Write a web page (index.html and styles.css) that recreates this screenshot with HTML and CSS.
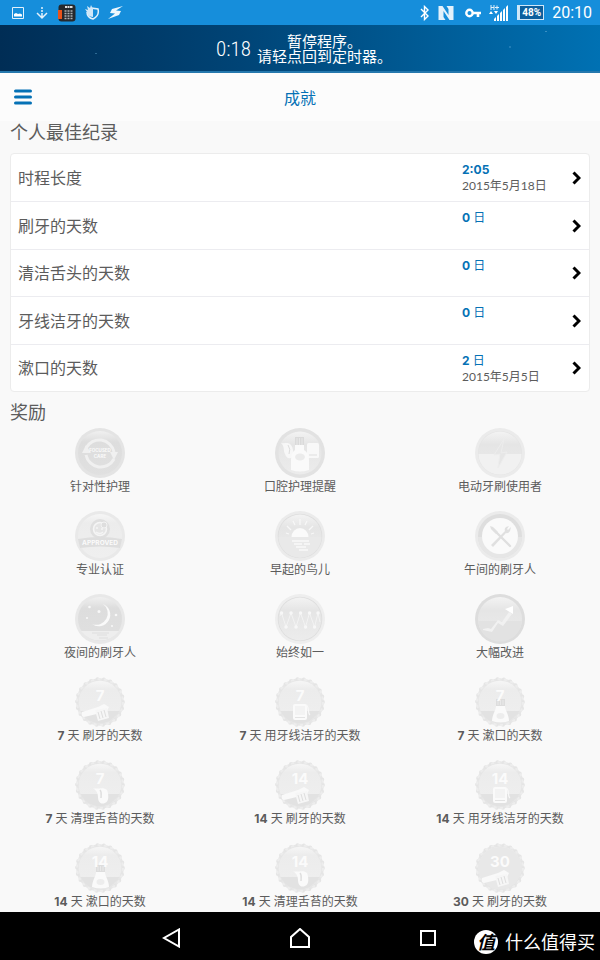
FILE: index.html
```
<!DOCTYPE html>
<html lang="zh-CN">
<head>
<meta charset="utf-8">
<meta name="viewport" content="width=device-width, initial-scale=1">
<title>成就</title>
<link rel="stylesheet" href="styles.css">
</head>
<body>
<svg class="defs" aria-hidden="true">
  <defs>
    <linearGradient id="face" x1="0" y1="0" x2="0" y2="1"><stop offset="0" stop-color="#f3f3f3"/><stop offset=".3" stop-color="#e5e5e5"/><stop offset="1" stop-color="#ececec"/></linearGradient>
    <linearGradient id="dark" x1="0" y1="0" x2="0" y2="1"><stop offset="0" stop-color="#f0f0f0"/><stop offset=".25" stop-color="#dddddd"/><stop offset="1" stop-color="#e0e0e0"/></linearGradient>
    <linearGradient id="pale" x1="0" y1="0" x2="0" y2="1"><stop offset="0" stop-color="#f6f6f6"/><stop offset=".2" stop-color="#ececec"/><stop offset="1" stop-color="#efefef"/></linearGradient>
    <clipPath id="disc"><circle cx="25" cy="25" r="21.5"/></clipPath>
    <symbol id="medal" viewBox="0 0 50 50">
      <circle cx="25" cy="25" r="23.800" fill="#e7e7e7"/>
      <circle cx="25" cy="25" r="22.900" fill="none" stroke="#e5e5e5" stroke-width="4" stroke-linecap="round" stroke-dasharray="0 6.540"/>
      <circle cx="25" cy="25" r="22.900" fill="none" stroke="#ededed" stroke-width="2" stroke-dasharray="3 3.540"/>
      <circle cx="25" cy="25" r="21.300" fill="url(#pale)"/>
      <g clip-path="url(#disc)"><path d="M0 34h50v16H0z" fill="#e2e2e2"/><path d="M28 50 46 34h4v16z" fill="#e8e8e8"/></g>
    </symbol>
    <symbol id="brush" viewBox="0 0 50 50">
      <path d="m7 35 16-5 6-3 5 3-2 4-6 2-17 4c-2 0-3-3-2-5z" fill="#f9f9f9"/>
      <path d="m20 33 12-2 2 10-11 3z" fill="#f6f6f6"/><path d="m23 35 2 7m1-8 2 7m1-8 2 7" stroke="#dedede" fill="none"/>
    </symbol>
    <symbol id="floss" viewBox="0 0 50 50">
      <rect x="18" y="27" width="14" height="16" rx="2" fill="#fafafa"/><rect x="20" y="29" width="10" height="9" fill="#f3f3f3"/><path d="M20 40.500h10" stroke="#e3e3e3"/><path d="M31 28c4 2 1 8 4 10" fill="none" stroke="#f8f8f8" stroke-width="1.200"/>
    </symbol>
    <symbol id="rinse" viewBox="0 0 50 50">
      <path d="M21 22h9v7h-9z" fill="#dddddd"/><path d="M23 23v5m2.500-5v5m2.500-5v5" stroke="#e9e9e9"/>
      <path d="M21 29h9c0 4 4 9 4 15q-8 3-17 0c0-6 4-11 4-15z" fill="#fafafa"/><ellipse cx="25.500" cy="39" rx="4" ry="3" fill="#ededed"/>
    </symbol>
    <symbol id="tongue" viewBox="0 0 50 50">
      <path d="M18 28c4 2 10-2 14 2 2 5 2 12-2 13-5 2-7-2-7-6s-2-7-5-9z" fill="#fafafa"/><path d="M25 30c2 2 1 5 1 8" fill="none" stroke="#dfdfdf" stroke-width="1.500"/>
    </symbol>
  </defs>
</svg>

<div class="status">
  <div class="status-group">
    <svg width="12" height="12" viewBox="0 0 12 12"><path d="M.5.5h11v11H.5z" fill="none" stroke="#e3f1fb"/><path d="M2 9.500V7l2-1 2 1 2-.5 2 1v2z" fill="#fff"/></svg>
    <svg class="download" width="12" height="14" viewBox="0 0 12 14"><path d="M6 1v2m0 1v2m0 1v5M1 7l5 5 5-5" fill="none" stroke="#e3f1fb" stroke-width="1.500"/></svg>
    <svg width="18" height="18" viewBox="0 0 18 18"><rect x=".5" y=".5" width="17" height="17" rx="3" fill="#25282c"/><path d="M0 6h4v9H0z" fill="#e9531b"/><path d="M7 3h8" stroke="#ddd" stroke-width="2" stroke-dasharray="2 .5"/><path d="M6.500 7h9m-9 2.500h9m-9 2.500h9m-9 2.500h9" stroke="#aeb1b4" stroke-width="1.400" stroke-dasharray="2 1"/></svg>
    <svg width="16" height="17" viewBox="0 0 16 17"><path d="M7 4l7 1c1 4-1 8-5 10-4-1-6-4-6-7" fill="none" stroke="#e3f1fb" stroke-width="1.500"/><path d="M1 5l3 1-1-4 3 2 1-3 2 4v8C5 13 3 10 3 8z" fill="#cfe7f8"/></svg>
    <svg width="15" height="15" viewBox="0 0 15 15"><path d="M15 1 4 4 2 8l5 .5L0 14l11-4 2-4-5-.5z" fill="#eef7fd"/></svg>
  </div>
  <div class="status-group status-right">
    <svg width="10" height="16" viewBox="0 0 10 16"><path d="m1 4 7 7-3.500 3.500v-13L8 5l-7 7" fill="none" stroke="#fff" stroke-width="1.400"/></svg>
    <svg width="16" height="16" viewBox="0 0 16 16"><path d="M.5 1h4l6 9V4l-2-3h7v14h-4l-6-9v6l2 3h-7z" fill="#e3f1fb"/></svg>
    <svg class="key" width="16" height="10" viewBox="0 0 16 10"><circle cx="4.500" cy="5" r="3.200" fill="none" stroke="#fff" stroke-width="2.400"/><path d="M8 5h8m-3 0v4" stroke="#fff" stroke-width="2.600"/></svg>
    <svg width="20" height="18" viewBox="0 0 20 18"><path d="M2 1v5m3-5v5M2 3.500h3M6 3.500h4M8 1.500v4" stroke="#e3f1fb"/><path d="m0 10 2-3 2 3zm5-3h4l-2 3z" fill="#fff"/><path d="M5 17v-2l2-2v4zm3 0v-5l2-2v7zm3 0V9l2-2v10zm3 0V6l2-2v13zm3 0V3l2-2v16z" fill="#fff"/></svg>
    <span class="battery">48%</span>
    <time class="clock">20:10</time>
  </div>
</div>

<button class="timer" type="button">
  <span class="timer-count">0:18</span>
  <span class="timer-text"><span>暂停程序。</span><span>请轻点回到定时器。</span></span>
</button>

<header class="header">
  <button class="menu" type="button" aria-label="菜单"><svg width="20" height="16" viewBox="0 0 20 16"><path d="M2.500 2h15m-15 6h15m-15 6h15" stroke="#0571b5" stroke-width="3" stroke-linecap="round"/></svg></button>
  <h1>成就</h1>
</header>

<main>
  <h2>个人最佳纪录</h2>
  <ul class="records">
    <li><a href="#"><span class="name">时程长度</span><span class="value"><span class="score"><b>2:05</b></span><span class="date">2015年5月18日</span></span><svg class="chevron" width="9" height="14" viewBox="0 0 9 14"><path d="m1.500 1.500 5.500 5.500-5.500 5.500"/></svg></a></li>
    <li><a href="#"><span class="name">刷牙的天数</span><span class="value"><span class="score"><b>0</b> 日</span></span><svg class="chevron" width="9" height="14" viewBox="0 0 9 14"><path d="m1.500 1.500 5.500 5.500-5.500 5.500"/></svg></a></li>
    <li><a href="#"><span class="name">清洁舌头的天数</span><span class="value"><span class="score"><b>0</b> 日</span></span><svg class="chevron" width="9" height="14" viewBox="0 0 9 14"><path d="m1.500 1.500 5.500 5.500-5.500 5.500"/></svg></a></li>
    <li><a href="#"><span class="name">牙线洁牙的天数</span><span class="value"><span class="score"><b>0</b> 日</span></span><svg class="chevron" width="9" height="14" viewBox="0 0 9 14"><path d="m1.500 1.500 5.500 5.500-5.500 5.500"/></svg></a></li>
    <li><a href="#"><span class="name">漱口的天数</span><span class="value"><span class="score"><b>2</b> 日</span><span class="date">2015年5月5日</span></span><svg class="chevron" width="9" height="14" viewBox="0 0 9 14"><path d="m1.500 1.500 5.500 5.500-5.500 5.500"/></svg></a></li>
  </ul>

  <h2>奖励</h2>
  <ul class="awards">
    <li><svg class="badge" viewBox="0 0 50 50"><circle cx="25" cy="25" r="25" fill="#e4e4e4"/><circle cx="25" cy="25" r="22" fill="url(#dark)"/><path d="M11 20a15 15 0 0 1 28 4m0 7a15 15 0 0 1-28-4" fill="none" stroke="#f0f0f0" stroke-width="3"/><path d="m7 25 4-8 5 8zm28-1h8l-4 8z" fill="#f0f0f0"/><text x="25" y="24" font-size="4.500">FOCUSED</text><text x="25" y="30" font-size="4.500">CARE</text></svg><span>针对性护理</span></li>
    <li><svg class="badge" viewBox="0 0 50 50"><circle cx="25" cy="25" r="25" fill="#e2e2e2"/><circle cx="25" cy="25" r="21.500" fill="url(#face)"/><path d="M6 15c4 1 6-1 9 1 4 3 4 12 1 14-3 1-5-1-6-4-2-4 0-7-4-11z" fill="#f7f7f7"/><path d="M13 17q3 4 1 9" fill="none" stroke="#ddd"/><rect x="32" y="15" width="12" height="15" rx="1.500" fill="#f8f8f8"/><path d="M34 27h8" stroke="#dedede"/><path d="M20 9h9v9h-9z" fill="#dadada"/><path d="M22 10v7m2.500-7v7m2.500-7v7" stroke="#e8e8e8"/><path d="M20 17h9v5q5 3 5 10v10q-9 3-18 0V32q0-7 4-10z" fill="#fafafa"/><ellipse cx="25" cy="29" rx="5" ry="3.500" fill="#ebebeb"/></svg><span>口腔护理提醒</span></li>
    <li><svg class="badge" viewBox="0 0 50 50"><circle cx="25" cy="25" r="25" fill="#ebebeb"/><circle cx="25" cy="25" r="22" fill="#e3e3e3"/><circle cx="25" cy="25" r="21.500" fill="url(#face)"/><path d="M3.500 26h43a21.500 20.500 0 0 1-43 0z" fill="#f1f1f1"/><path d="m29 11-10 16 6-1-2 14 9-16-6 1z" fill="#e6e6e6" stroke="#ededed"/></svg><span>电动牙刷使用者</span></li>

    <li><svg class="badge" viewBox="0 0 50 50"><circle cx="25" cy="25" r="25" fill="#e9e9e9"/><circle cx="25" cy="25" r="22" fill="url(#pale)"/><circle cx="25" cy="18" r="10" fill="#dfdfdf"/><circle cx="25" cy="18" r="6.500" fill="#e5e5e5" stroke="#f5f5f5" stroke-width="1.500"/><path d="M21 17h2m3 1h2m-7 3q4 3 7 0" fill="none" stroke="#f5f5f5" stroke-width="1.500"/><circle cx="29" cy="14" r="3" fill="#dedede" stroke="#f3f3f3"/><path d="M3 28q22-4 44 0l-2 9q-20-3-40 0z" fill="#dedede"/><text x="25" y="34" font-size="6.500">APPROVED</text></svg><span>专业认证</span></li>
    <li><svg class="badge" viewBox="0 0 50 50"><circle cx="25" cy="25" r="25" fill="#ebebeb"/><circle cx="25" cy="25" r="22.300" fill="#dddddd"/><circle cx="25" cy="25" r="21.500" fill="url(#face)"/><path d="M3.500 26h43a21.500 20.500 0 0 1-43 0z" fill="#e9e9e9"/><path d="M16.500 26a8.500 9 0 0 1 17 0z" fill="#fafafa"/><path d="M25 8v6m-7-4 2 4m-8 1 4 4m-5 3 3 1m18-13-2 4m8 1-4 4m5 3-3 1" stroke="#f7f7f7" stroke-width="1.300"/><path d="M17 30h17m-15 3h8m2 0h6m-14 3h10m-7 3h9" stroke="#f9f9f9" stroke-width="1.400"/></svg><span>早起的鸟儿</span></li>
    <li><svg class="badge" viewBox="0 0 50 50"><circle cx="25" cy="25" r="25" fill="#ebebeb"/><circle cx="25" cy="25" r="22" fill="#dedede"/><path d="M3 26h44a22 21 0 0 1-44 0z" fill="#e6e6e6"/><circle cx="25" cy="25" r="18" fill="#fafafa"/><path d="m18 18 8 8 9 9" stroke="#dfdfdf" stroke-width="2.400" stroke-linecap="round"/><path d="m15 15 3 1 5 5-2 2-5-5zm1 19 14-14q-1-2 1-4l3-1-2 3 1 1 3-3-1 4q-2 3-4 2L18 36z" fill="#e0e0e0"/></svg><span>午间的刷牙人</span></li>

    <li><svg class="badge" viewBox="0 0 50 50"><circle cx="25" cy="25" r="25" fill="#e8e8e8"/><circle cx="25" cy="25" r="22" fill="url(#dark)"/><path d="M6 37h38q-7 9.500-19 9.500T6 37z" fill="#eeeeee"/><path d="M28 10a11.500 11.500 0 1 1-11 20 11.500 11.500 0 0 0 11-20z" fill="#fafafa"/><path d="M17 39h17m-12 2h10m-8 3h9" stroke="#dedede"/><g fill="#f8f8f8"><circle cx="14.500" cy="13" r="1.300"/><circle cx="24" cy="17.500" r="1.500"/><circle cx="12" cy="24" r="1"/><circle cx="41" cy="21" r="1.300"/><circle cx="37" cy="32" r="1"/></g></svg><span>夜间的刷牙人</span></li>
    <li><svg class="badge" viewBox="0 0 50 50"><circle cx="25" cy="25" r="25" fill="#eeeeee"/><circle cx="25" cy="25" r="22.300" fill="#dddddd"/><circle cx="25" cy="25" r="21.500" fill="url(#face)"/><path d="m5 22 1.500-3L11 33l5-14 5 14 4.500-14 5 14 4-14 5 14L43 19l2 9" fill="none" stroke="#f3f3f3"/><path d="M6.500 19h.1M11 33h.1M16 19h.1M21 33h.1M25.500 19h.1M30.500 33h.1M34.500 19h.1M39.500 33h.1M43 19h.1" stroke="#f7f7f7" stroke-width="3.400" stroke-linecap="round"/></svg><span>始终如一</span></li>
    <li><svg class="badge" viewBox="0 0 50 50"><circle cx="25" cy="25" r="25" fill="#dddddd"/><circle cx="25" cy="25" r="22" fill="url(#face)"/><path d="M3.500 27h43a21.500 20.500 0 0 1-43 0z" fill="#e2e2e2"/><path d="m8 35 5-1 3 1 7-9 4 2 7-10 3 2-9 12-5-3-6 9-9-2z" fill="#f1f1f1"/><path d="m30 15 8-3v8z" fill="#fff"/></svg><span>大幅改进</span></li>

    <li><svg class="badge" viewBox="0 0 50 50"><use href="#medal"/><text x="25" y="24" font-size="15">7</text><use href="#brush"/></svg><span><b>7</b> 天 刷牙的天数</span></li>
    <li><svg class="badge" viewBox="0 0 50 50"><use href="#medal"/><text x="25" y="24" font-size="15">7</text><use href="#floss"/></svg><span><b>7</b> 天 用牙线洁牙的天数</span></li>
    <li><svg class="badge" viewBox="0 0 50 50"><use href="#medal"/><use href="#rinse"/><text x="25" y="24" font-size="15">7</text></svg><span><b>7</b> 天 漱口的天数</span></li>

    <li><svg class="badge" viewBox="0 0 50 50"><use href="#medal"/><text x="25" y="24" font-size="15">7</text><use href="#tongue"/></svg><span><b>7</b> 天 清理舌苔的天数</span></li>
    <li><svg class="badge" viewBox="0 0 50 50"><use href="#medal"/><text x="25" y="24" font-size="15">14</text><use href="#brush"/></svg><span><b>14</b> 天 刷牙的天数</span></li>
    <li><svg class="badge" viewBox="0 0 50 50"><use href="#medal"/><text x="25" y="24" font-size="15">14</text><use href="#floss"/></svg><span><b>14</b> 天 用牙线洁牙的天数</span></li>

    <li><svg class="badge" viewBox="0 0 50 50"><use href="#medal"/><use href="#rinse"/><text x="25" y="24" font-size="15">14</text></svg><span><b>14</b> 天 漱口的天数</span></li>
    <li><svg class="badge" viewBox="0 0 50 50"><use href="#medal"/><text x="25" y="24" font-size="15">14</text><use href="#tongue"/></svg><span><b>14</b> 天 清理舌苔的天数</span></li>
    <li><svg class="badge" viewBox="0 0 50 50"><use href="#medal"/><circle cx="25" cy="25" r="21.300" fill="#e8e8e8"/><text x="25" y="24" font-size="15">30</text><use href="#brush"/></svg><span><b>30</b> 天 刷牙的天数</span></li>
  </ul>
</main>

<nav class="navbar">
  <button type="button" aria-label="返回"><svg width="20" height="20" viewBox="0 0 20 20"><path d="M17 1.500v17L2 10z"/></svg></button>
  <button type="button" aria-label="主页"><svg width="20" height="20" viewBox="0 0 20 20"><path d="M1 19V9l9-8 9 8v10z"/></svg></button>
  <button type="button" aria-label="最近任务"><svg width="20" height="20" viewBox="0 0 20 20"><path d="M3 3h14v14H3z"/></svg></button>
  <div class="watermark"><span class="mark">值</span><span>什么值得买</span></div>
</nav>
</body>
</html>
```
FILE: styles.css
```
* { box-sizing: border-box; }

body {
  margin: 0;
  min-height: 100vh;
  display: flex;
  flex-direction: column;
  background: #f9f9f9;
  color: #5c5c5c;
  font-family: Lato, "Noto Sans CJK SC", sans-serif;
  font-size: 12px;
}

button {
  border: 0;
  padding: 0;
  background: none;
  color: inherit;
  font: inherit;
  cursor: pointer;
}

ul {
  list-style: none;
  margin: 0;
  padding: 0;
}

svg { display: block; }

b {
  font-family: Inter, sans-serif;
  font-weight: 700;
}

.defs {
  position: absolute;
  width: 0;
  height: 0;
}

.status {
  display: flex;
  justify-content: space-between;
  align-items: center;
  height: 25px;
  padding: 0 8px 0 12px;
  background: #168edb;
  color: #fff;
  font-family: Roboto, sans-serif;
}

.status-group {
  display: flex;
  align-items: center;
  gap: 8px;
}

.download { margin: 0 2px 0 4px; }

.key { margin-left: 3px; }

.battery {
  width: 27px;
  height: 15px;
  border: 1px solid #cfe7f8;
  border-left-width: 3px;
  background: #0d5f9d;
  font-size: 10px;
  font-weight: 700;
  line-height: 13px;
  text-align: center;
}

.clock {
  font-size: 16px;
  line-height: 25px;
}

.timer {
  display: flex;
  justify-content: center;
  align-items: center;
  gap: 6px;
  height: 48px;
  padding: 2px 0 0 8px;
  border-bottom: 2px solid #2578ad;
  background:
    radial-gradient(circle at 16% 62%, #2d6a93 0 1px, transparent 1px),
    radial-gradient(circle at 91% 14%, #3a8fc2 0 1px, transparent 1px),
    radial-gradient(circle at 85% 48%, #207cb5 0 1px, transparent 1px),
    linear-gradient(90deg, #002d55, #004476 40%, #0071b3);
  color: #fff;
}

.timer-count {
  font-family: "Liberation Sans Narrow", "Roboto Condensed", Lato, sans-serif;
  font-size: 21px;
  font-weight: 300;
}

.timer-text {
  display: flex;
  flex-direction: column;
  align-items: center;
  font-size: 15px;
  line-height: 15px;
}

.header {
  display: grid;
  grid-template-columns: 20px 1fr 20px;
  align-items: center;
  height: 48px;
  padding: 0 13px;
  background: #fcfcfc;
  color: #0571b5;
}

.header h1 {
  margin: 0;
  font-size: 16px;
  font-weight: 400;
  text-align: center;
}

main { padding: 0 10px 2px; }

h2 {
  margin: 0;
  font-size: 18px;
  font-weight: 400;
  line-height: 22px;
}

.records {
  display: grid;
  grid-auto-rows: minmax(47px, auto) minmax(48px, auto);
  margin: 10px 0 9px;
  border: 1px solid #ececec;
  border-radius: 4px;
  background: #fff;
}

.records li + li { border-top: 1px solid #ececf0; }

.records a {
  display: grid;
  grid-template-columns: 1fr 110px 9px;
  height: 100%;
  padding: 0 8px 0 7px;
  color: inherit;
  text-decoration: none;
}

.name {
  align-self: center;
  font-size: 16px;
  line-height: 20px;
}

.value {
  display: flex;
  flex-direction: column;
  padding-top: 8px;
  line-height: 16px;
}

.score { color: #0571b5; }

.chevron {
  align-self: center;
  fill: none;
  stroke: #000;
  stroke-width: 3;
}

.awards {
  display: grid;
  grid-template-columns: repeat(3, 1fr);
  row-gap: 16px;
  margin: 5px -10px 0;
  text-align: center;
  line-height: 17px;
}

.badge {
  width: 50px;
  height: 50px;
  margin: 0 auto;
}

.badge text {
  fill: #fbfbfb;
  font-family: Inter, sans-serif;
  font-weight: 700;
  text-anchor: middle;
}

.navbar {
  display: grid;
  grid-template-columns: 1fr 128px 128px 128px 1fr;
  align-items: center;
  height: 48px;
  margin-top: auto;
  padding-top: 4px;
  background: #000;
  color: #fff;
}

.navbar button {
  display: flex;
  justify-content: center;
}

.navbar button:first-child { grid-column: 2; }

.navbar path {
  fill: none;
  stroke: #fff;
  stroke-width: 2;
}

.watermark {
  display: flex;
  justify-content: flex-end;
  align-items: center;
  gap: 7px;
  min-width: 0;
  padding: 8px 5px 0 0;
  font-size: 18px;
  line-height: 24px;
  white-space: nowrap;
}

.mark {
  width: 24px;
  flex: none;
  border-radius: 50%;
  background: #fff;
  color: #000;
  font-style: italic;
  font-weight: 700;
  text-align: center;
}
```
